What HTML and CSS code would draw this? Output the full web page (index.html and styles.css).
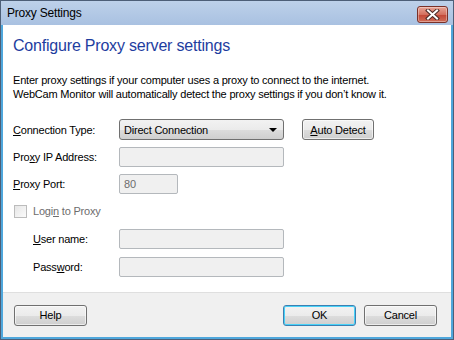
FILE: index.html
```html
<!DOCTYPE html>
<html lang="en">
  <head>
    <meta charset="UTF-8" />
    <title>Proxy Settings</title>
    <link rel="stylesheet" href="styles.css">
  </head>
  <body>
    <div class="window">
      <div class="titlebar">
        <span class="title">Proxy Settings</span>
        <button class="close-button" aria-label="Close">
          <svg width="15" height="11" viewBox="0 0 15 11">
            <path d="M3 1.5 L12 9.5 M12 1.5 L3 9.5" stroke="#4a2a28" stroke-width="4" stroke-linecap="square" />
            <path d="M3 1.5 L12 9.5 M12 1.5 L3 9.5" stroke="#fff" stroke-width="2" stroke-linecap="square" />
          </svg>
        </button>
      </div>
      <div class="client">
        <div class="content">
          <h1 class="heading">Configure Proxy server settings</h1>
          <p class="intro">
            Enter proxy settings if your computer uses a proxy to connect to the internet.<br />WebCam Monitor will automatically detect the proxy settings if you don’t know it.
          </p>

          <div class="form-row row-type">
            <label class="label"><u>C</u>onnection Type:</label>
            <div class="combo">
              <span>Direct Connection</span>
              <span class="combo-arrow"></span>
            </div>
            <button class="btn btn-detect"><u>A</u>uto Detect</button>
          </div>
          <div class="form-row">
            <label class="label">Pro<u>x</u>y IP Address:</label>
            <div class="field field-wide"></div>
          </div>
          <div class="form-row">
            <label class="label"><u>P</u>roxy Port:</label>
            <div class="field field-port">80</div>
          </div>
          <div class="form-row row-check">
            <span class="checkbox"></span>
            <label class="check-label">Logi<u>n</u> to Proxy</label>
          </div>
          <div class="form-row row-user">
            <label class="label sub-label"><u>U</u>ser name:</label>
            <div class="field field-wide"></div>
          </div>
          <div class="form-row row-pass">
            <label class="label sub-label">Pass<u>w</u>ord:</label>
            <div class="field field-wide"></div>
          </div>
        </div>
        <div class="footer">
          <button class="btn">Help</button>
          <div class="spacer"></div>
          <button class="btn btn-default">OK</button>
          <button class="btn">Cancel</button>
        </div>
      </div>
    </div>
  </body>
</html>
```

FILE: styles.css
```css
* {
  box-sizing: border-box;
}

body {
  margin: 0;
  font-family: "Liberation Sans", Arial, sans-serif;
  font-size: 11px;
  color: #000;
  background: #fff;
}

.window {
  width: 454px;
  height: 340px;
  display: flex;
  flex-direction: column;
  border: 1px solid #4d5f78;
  background: #b4cbe6;
}

.titlebar {
  height: 24px;
  display: flex;
  align-items: center;
  padding: 0 5px 0 6px;
  background: linear-gradient(#bdd1ea, #a9c1e1);
}

.title {
  flex: 1;
  font-size: 12px;
  letter-spacing: -0.2px;
  color: #000;
}

.close-button {
  width: 31px;
  height: 17px;
  margin-top: 3px;
  padding: 0;
  display: flex;
  justify-content: center;
  align-items: center;
  border: 1px solid #7a3129;
  border-radius: 3px;
  background: linear-gradient(#e7a597, #d4705f 50%, #c24535 51%, #cf6d58);
  box-shadow: inset 0 0 0 1px rgba(255, 255, 255, 0.35);
}

.client {
  flex: 1;
  display: flex;
  flex-direction: column;
  border: 2px solid #4fa7dc;
  border-top: none;
  background: #fff;
}

.content {
  flex: 1;
  padding: 11px 10px 0 10px;
}

.heading {
  margin: 0;
  font-size: 16px;
  font-weight: normal;
  line-height: 20px;
  color: #1e3d9f;
  letter-spacing: -0.2px;
}

.intro {
  margin: 17px 0 0 0;
  line-height: 14px;
  letter-spacing: -0.2px;
}

.form-row {
  display: flex;
  align-items: center;
  margin-top: 7px;
}

.row-type {
  margin-top: 18px;
}

.row-check {
  margin-top: 6px;
  height: 22px;
  padding-left: 1px;
}

.row-user {
  margin-top: 7px;
}

.row-pass {
  margin-top: 8px;
}

.label {
  width: 106px;
  letter-spacing: -0.2px;
}

.sub-label {
  width: 86px;
  margin-left: 20px;
}

.combo {
  width: 165px;
  height: 21px;
  display: flex;
  align-items: center;
  justify-content: space-between;
  padding: 0 6px 0 4px;
  border: 1px solid #707070;
  border-radius: 3px;
  background: linear-gradient(#f2f2f2, #ebebeb 50%, #dddddd 51%, #cfcfcf);
  letter-spacing: -0.2px;
}

.combo-arrow {
  width: 0;
  height: 0;
  border-left: 4px solid transparent;
  border-right: 4px solid transparent;
  border-top: 4px solid #000;
}

.btn {
  height: 21px;
  width: 73px;
  padding: 0;
  font-family: inherit;
  font-size: 11px;
  letter-spacing: -0.2px;
  color: #000;
  border: 1px solid #707070;
  border-radius: 3px;
  background: linear-gradient(#f2f2f2, #ebebeb 50%, #dddddd 51%, #cfcfcf);
  box-shadow: inset 0 0 0 1px rgba(255, 255, 255, 0.6);
}

.btn-detect {
  width: 72px;
  margin-left: 18px;
}

.btn-default {
  border-color: #3c7fb1;
  box-shadow: inset 0 0 0 1px #48d2f8;
}

.field {
  height: 20px;
  padding: 2px 4px;
  border: 1px solid #b4b8bc;
  border-radius: 2px;
  background: #f0f0f0;
  color: #6d6d6d;
  line-height: 14px;
}

.field-wide {
  width: 165px;
}

.field-port {
  width: 59px;
}

.checkbox {
  width: 13px;
  height: 13px;
  border: 1px solid #bcbcbc;
  background: linear-gradient(135deg, #e6e6e6, #fbfbfb);
}

.check-label {
  margin-left: 6px;
  color: #6d6d6d;
  letter-spacing: -0.2px;
}

.footer {
  height: 45px;
  display: flex;
  align-items: center;
  gap: 8px;
  padding: 0 14px 0 11px;
  border-top: 1px solid #dfdfdf;
  background: #f0f0f0;
}

.spacer {
  flex: 1;
}
```
